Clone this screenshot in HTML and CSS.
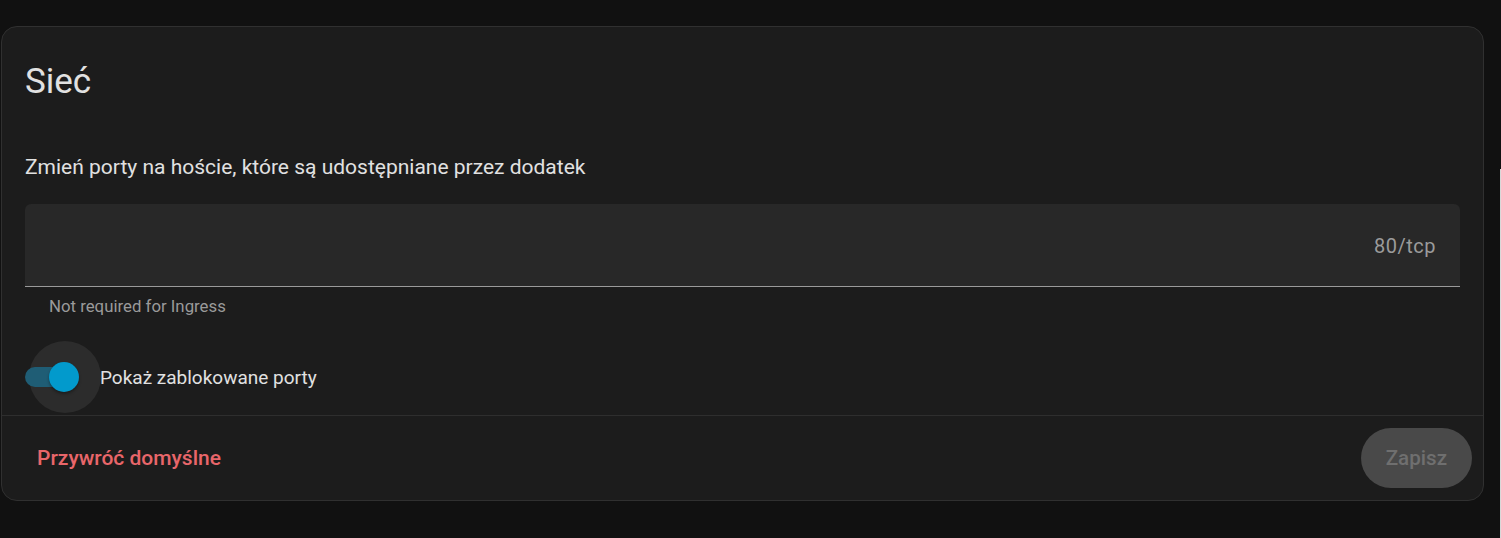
FILE: index.html
```html
<!DOCTYPE html>
<html lang="pl">
<head>
<meta charset="utf-8">
<title>Sieć</title>
<link rel="stylesheet" href="styles.css">
</head>
<body>
<div class="card">
  <div class="card-content">
    <h1 class="title">Sieć</h1>
    <p class="desc">Zmień porty na hoście, które są udostępniane przez dodatek</p>
    <div class="field">
      <span class="field-value">80/tcp</span>
    </div>
    <div class="helper">Not required for Ingress</div>
    <div class="switch-row">
      <div class="switch">
        <span class="halo"></span>
        <span class="track"></span>
        <span class="thumb"></span>
      </div>
      <span class="switch-label">Pokaż zablokowane porty</span>
    </div>
  </div>
  <div class="card-actions">
    <button class="btn btn-text">Przywróć domyślne</button>
    <button class="btn btn-filled">Zapisz</button>
  </div>
</div>
<div class="edge-line"></div>
</body>
</html>
```
FILE: styles.css
```css
html, body {
  margin: 0;
  padding: 0;
  background: #111111;
  height: 100%;
  overflow: hidden;
}
body {
  font-family: Roboto, "Noto Sans", sans-serif;
  color: #e1e1e1;
  padding: 26px 0 0 1px;
  box-sizing: border-box;
  position: relative;
}
.card {
  width: 1483px;
  box-sizing: border-box;
  background: #1c1c1c;
  border: 1px solid #303030;
  border-radius: 16px;
}
.card-content {
  padding: 0 23px;
  display: flex;
  flex-direction: column;
}
.title {
  margin: 0;
  font-size: 35px;
  font-weight: 400;
  line-height: 48px;
  padding-top: 31px;
  color: #e1e1e1;
}
.desc {
  margin: 0;
  margin-top: 47px;
  font-size: 21px;
  line-height: 28px;
  color: #e1e1e1;
}
.field {
  margin-top: 23px;
  height: 83px;
  box-sizing: border-box;
  background: #282828;
  border-radius: 6px 6px 0 0;
  border-bottom: 1px solid #9a9a9a;
  display: flex;
  align-items: center;
  justify-content: flex-end;
  padding: 0 24px 0 24px;
}
.field-value {
  font-size: 20px;
  color: #9b9b9b;
  letter-spacing: 0.5px;
  padding-top: 2px;
}
.helper {
  padding: 7px 24px 0;
  font-size: 16.8px;
  line-height: 24px;
  color: #9a9a9a;
}
.switch-row {
  display: flex;
  align-items: center;
  height: 72px;
  margin-top: 23px;
  margin-bottom: 2px;
}
.switch {
  position: relative;
  width: 50px;
  height: 20px;
  margin-right: 25px;
}
.track {
  position: absolute;
  left: 0;
  top: 0;
  width: 50px;
  height: 20px;
  border-radius: 10px;
  background: #1f5d75;
}
.halo {
  position: absolute;
  left: 4px;
  top: -26px;
  width: 72px;
  height: 72px;
  border-radius: 50%;
  background: #2c2c2c;
}
.thumb {
  position: absolute;
  left: 24px;
  top: -5px;
  width: 30px;
  height: 30px;
  border-radius: 50%;
  background: #029acc;
  box-shadow: 0 2px 3px rgba(0,0,0,0.35);
}
.switch-label {
  font-size: 19px;
  font-weight: 400;
  color: #e1e1e1;
}
.card-actions {
  border-top: 1px solid #2e2e2e;
  display: flex;
  justify-content: space-between;
  align-items: center;
  padding: 12px 11px 12px 11px;
}
.btn {
  height: 60px;
  border: none;
  border-radius: 30px;
  padding: 0 24px;
  font-family: Roboto, "Noto Sans", sans-serif;
  font-weight: 500;
  font-size: 21px;
  background: transparent;
}
.btn-text {
  color: #e8666a;
}
.btn-filled {
  background: #494949;
  color: #6f6f6f;
  font-size: 20.6px;
  padding: 0 25px;
}
.edge-line {
  position: absolute;
  left: 1500px;
  top: 169px;
  width: 1px;
  height: 369px;
  background: #d8d8d8;
}
```
